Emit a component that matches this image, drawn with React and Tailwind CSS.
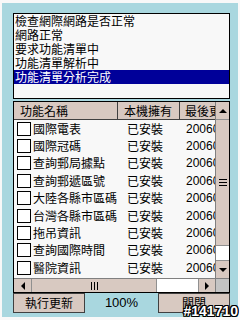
const logLines = [
  "檢查網際網路是否正常",
  "網路正常",
  "要求功能清單中",
  "功能清單解析中",
  "功能清單分析完成",
];

const rows = [
  "國際電表",
  "國際冠碼",
  "查詢郵局據點",
  "查詢郵遞區號",
  "大陸各縣市區碼",
  "台灣各縣市區碼",
  "拖吊資訊",
  "查詢國際時間",
  "醫院資訊",
  "從事動態",
];

const cjk = "font-['Noto_Sans_CJK_TC','Noto_Sans_CJK_SC',sans-serif]";
const latin = "font-['Liberation_Sans',Arial,sans-serif]";
const beige = "bg-[#d8c9c1]";

function Tri({ dir }) {
  const pts = {
    up: "0,5 4,1 8,5",
    down: "0,1 4,5 8,1",
    left: "5,0 1,4 5,8",
    right: "1,0 5,4 1,8",
  }[dir];
  const vertical = dir === "up" || dir === "down";
  return (
    <svg width={vertical ? 8 : 6} height={vertical ? 6 : 8} viewBox={vertical ? "0 0 8 6" : "0 0 6 8"}>
      <polygon points={pts} fill="#000" />
    </svg>
  );
}

export default function App() {
  return (
    <div className="relative w-[240px] h-[320px] bg-[#f8f8f8] px-[2px] py-[3px] overflow-hidden">
      <div className="h-full bg-[#a9d7df] pt-[10px] pl-[11px]">
        {/* status list */}
        <div className={`w-[217px] h-[86px] border border-black bg-[#f8f8f8] ${cjk} text-[12px] leading-[14px] text-black`}>
          {logLines.map((line, i) => (
            <div
              key={line}
              className={`pl-[1px] whitespace-nowrap ${i === logLines.length - 1 ? "bg-[#000099] text-white" : ""}`}
            >
              {line}
            </div>
          ))}
        </div>

        {/* function table */}
        <div className="mt-[2px] w-[217px] h-[192px] border border-black flex flex-col bg-[#f8f8f8]">
          <div className="flex h-[176px]">
            <div className={`w-[201px] overflow-hidden ${cjk} text-[12px] text-black`}>
              <div className={`flex h-[18px] ${beige} border-b border-[#404040] leading-[17px]`}>
                <div className="w-[104px] shrink-0 pl-[6px] border-r border-[#404040]">功能名稱</div>
                <div className="w-[62px] shrink-0 pl-[6px] border-r border-[#404040]">本機擁有</div>
                <div className="w-[40px] shrink-0 pl-[5px] whitespace-nowrap">最後更新</div>
              </div>
              {rows.map((name) => (
                <div key={name} className="flex items-center h-[17.4px]">
                  <div className="w-[104px] shrink-0 flex items-center pl-[3px] whitespace-nowrap">
                    <span className="w-[14px] h-[14px] border border-black bg-white shrink-0" />
                    <span className="ml-[2px]">{name}</span>
                  </div>
                  <div className="w-[62px] shrink-0 pl-[9px]">已安裝</div>
                  <div className={`w-[40px] shrink-0 pl-[6px] whitespace-nowrap ${latin}`}>20060410</div>
                </div>
              ))}
            </div>
            {/* vertical scrollbar */}
            <div className="w-[14px] flex flex-col border-l border-[#808080]">
              <div className={`h-[18px] ${beige} border-b border-[#909090] flex items-center justify-center`}>
                <Tri dir="up" />
              </div>
              <div className={`h-[126px] ${beige} border-b border-[#909090] flex items-center justify-center`}>
                <svg width="8" height="7" viewBox="0 0 8 7">
                  <rect x="0" y="0" width="8" height="1" fill="#000" />
                  <rect x="0" y="3" width="8" height="1" fill="#000" />
                  <rect x="0" y="6" width="8" height="1" fill="#000" />
                </svg>
              </div>
              <div className="h-[14px] bg-white" />
              <div className={`flex-1 ${beige} border-t border-[#909090] flex items-center justify-center`}>
                <Tri dir="down" />
              </div>
            </div>
          </div>
          {/* horizontal scrollbar */}
          <div className="flex h-[14px] border-t border-[#808080]">
            <div className={`w-[18px] ${beige} border-r border-[#909090] flex items-center justify-center`}>
              <Tri dir="left" />
            </div>
            <div className={`w-[125px] ${beige} border-r border-[#909090] flex items-center justify-center`}>
              <svg width="7" height="8" viewBox="0 0 7 8">
                <rect x="0" y="0" width="1" height="8" fill="#000" />
                <rect x="3" y="0" width="1" height="8" fill="#000" />
                <rect x="6" y="0" width="1" height="8" fill="#000" />
              </svg>
            </div>
            <div className="w-[41px] bg-white" />
            <div className={`w-[17px] ${beige} border-l border-[#909090] flex items-center justify-center`}>
              <Tri dir="right" />
            </div>
            <div className="flex-1 bg-[#c4c4c4] border-l border-[#808080]" />
          </div>
        </div>

        {/* bottom buttons */}
        <div className="flex w-[217px] h-[20px] items-stretch">
          <div className={`w-[72px] ${beige} border border-[#404040] flex items-center justify-center ${cjk} text-[12px] text-black`}>
            執行更新
          </div>
          <div className={`flex-1 flex items-center justify-center ${latin} text-[13px] text-black`}>100%</div>
          <div className={`w-[72px] ${beige} border border-[#404040] flex items-center justify-center ${cjk} text-[12px] text-black`}>
            關閉
          </div>
        </div>
      </div>

      <div
        className={`absolute right-[2px] bottom-[1px] ${latin} font-bold text-[14px] leading-[15px] text-white`}
        style={{ textShadow: "1px 0 0 #000, -1px 0 0 #000, 0 1px 0 #000, 0 -1px 0 #000, 1px 1px 0 #000, -1px -1px 0 #000, 1px -1px 0 #000, -1px 1px 0 #000" }}
      >
        #141710
      </div>
    </div>
  );
}
